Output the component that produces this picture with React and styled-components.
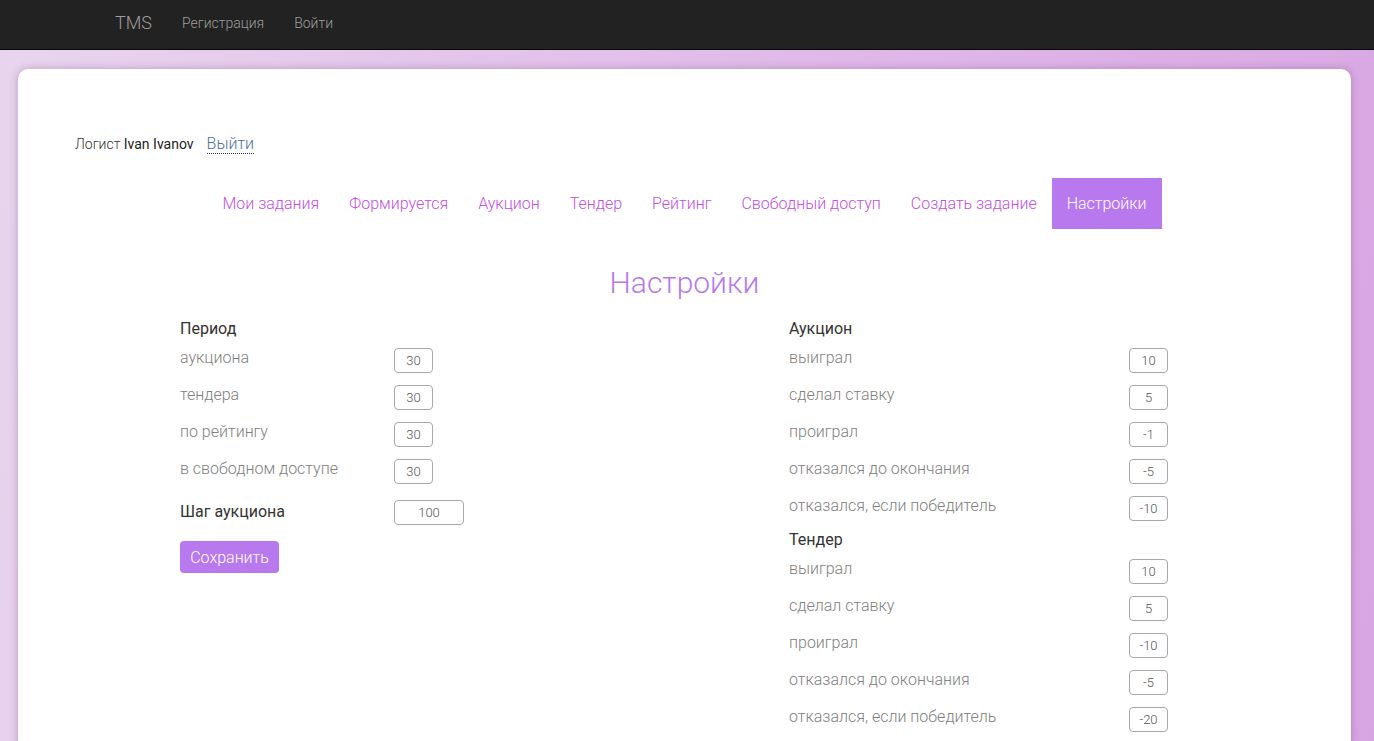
import React from "react";
import styled, { createGlobalStyle } from "styled-components";

const GlobalStyle = createGlobalStyle`
  html, body {
    margin: 0;
    padding: 0;
    overflow: hidden;
  }
  body {
    font-family: Roboto, "Liberation Sans", sans-serif;
    font-weight: 300;
    background: linear-gradient(100deg, #e8d5ed 0%, #dfb9e8 55%, #d8a5e3 100%);
    min-height: 100vh;
  }
`;

const Navbar = styled.nav`
  height: 50px;
  background: #222;
  border-bottom: 1px solid #080808;
  box-sizing: border-box;
  display: flex;
  align-items: flex-start;
  padding-left: 100px;
`;

const Brand = styled.a`
  color: #9d9d9d;
  font-size: 18px;
  font-weight: 300;
  padding: 0 15px;
  line-height: 46px;
`;

const NavLink = styled.a`
  color: #9d9d9d;
  font-size: 14px;
  font-weight: 300;
  padding: 0 15px;
  line-height: 46px;
`;

const Card = styled.main`
  margin: 19px 0 0 18px;
  width: 1333px;
  min-height: 760px;
  background: #fff;
  border-radius: 10px;
  box-shadow: 0 0 8px rgba(90, 40, 100, 0.3);
  padding-top: 64px;
  box-sizing: border-box;
`;

const UserLine = styled.div`
  padding-left: 57px;
  font-size: 14px;
  line-height: 22px;
  color: #333;
`;

const UserName = styled.span`
  font-weight: 400;
  color: #222;
`;

const Logout = styled.a`
  margin-left: 13px;
  font-size: 16px;
  color: #4f6f9f;
  border-bottom: 1px dotted #1a2fd8;
`;

const Tabs = styled.ul`
  list-style: none;
  margin: 23px 0 0;
  padding: 0;
  display: flex;
  justify-content: center;
`;

const Tab = styled.li`
  font-size: 16px;
  line-height: 21px;
  padding: 15px 15px;
  color: ${(p) => (p.active ? "#fff" : "#c24fdf")};
  background: ${(p) => (p.active ? "#b878ee" : "transparent")};
`;

const Title = styled.h1`
  margin: 37px 0 0;
  text-align: center;
  font-size: 30px;
  line-height: 34px;
  font-weight: 300;
  color: #b47aec;
`;

const Columns = styled.div`
  display: grid;
  grid-template-columns: 609px 379px;
  padding-left: 162px;
  margin-top: 19px;
`;

const Column = styled.section`
  display: flex;
  flex-direction: column;
`;

const Heading = styled.h3`
  margin: ${(p) => (p.after ? "-2px 0 8px" : "0 0 8px")};
  font-size: 16px;
  line-height: 20px;
  font-weight: 400;
  color: #333;
`;

const Row = styled.div`
  display: flex;
  align-items: flex-start;
  justify-content: ${(p) => (p.spread ? "space-between" : "flex-start")};
  height: 25px;
  margin-bottom: ${(p) => p.gap || 12}px;
`;

const Label = styled.span`
  width: ${(p) => (p.spread ? "auto" : "214px")};
  font-size: 16px;
  line-height: 22px;
  color: ${(p) => (p.strong ? "#333" : "#808080")};
  font-weight: ${(p) => (p.strong ? 400 : 300)};
  margin-top: ${(p) => (p.strong ? 2 : 0)}px;
`;

const NumInput = styled.input`
  width: ${(p) => p.w || 39}px;
  height: 25px;
  box-sizing: border-box;
  margin: 1px 0 0;
  padding: 0;
  border: 1px solid #a8a8a8;
  border-radius: 4px;
  text-align: center;
  font-family: Roboto, "Liberation Sans", sans-serif;
  font-weight: 300;
  font-size: 13px;
  color: #555;
  outline: none;
`;

const SaveButton = styled.button`
  align-self: flex-start;
  margin-top: 5px;
  width: 99px;
  height: 32px;
  border: none;
  border-radius: 4px;
  background: #b878ee;
  color: #fff;
  font-family: Roboto, "Liberation Sans", sans-serif;
  font-weight: 300;
  font-size: 16px;
  padding: 0;
`;

const tabs = [
  "Мои задания",
  "Формируется",
  "Аукцион",
  "Тендер",
  "Рейтинг",
  "Свободный доступ",
  "Создать задание",
  "Настройки",
];

const periods = [
  ["аукциона", 30],
  ["тендера", 30],
  ["по рейтингу", 30],
  ["в свободном доступе", 30],
];

const labels = [
  "выиграл",
  "сделал ставку",
  "проиграл",
  "отказался до окончания",
  "отказался, если победитель",
];

const auction = [10, 5, -1, -5, -10];
const tender = [10, 5, -10, -5, -20];

function ScoreList({ values }) {
  return values.map((v, i) => (
    <Row spread key={i}>
      <Label spread>{labels[i]}</Label>
      <NumInput defaultValue={v} />
    </Row>
  ));
}

export default function App() {
  return (
    <>
      <GlobalStyle />
      <Navbar>
        <Brand>TMS</Brand>
        <NavLink>Регистрация</NavLink>
        <NavLink>Войти</NavLink>
      </Navbar>
      <Card>
        <UserLine>
          Логист <UserName>Ivan Ivanov</UserName>
          <Logout>Выйти</Logout>
        </UserLine>
        <Tabs>
          {tabs.map((t) => (
            <Tab key={t} active={t === "Настройки"}>
              {t}
            </Tab>
          ))}
        </Tabs>
        <Title>Настройки</Title>
        <Columns>
          <Column>
            <Heading>Период</Heading>
            {periods.map(([l, v], i) => (
              <Row key={l} gap={i === 3 ? 16 : 12}>
                <Label>{l}</Label>
                <NumInput defaultValue={v} />
              </Row>
            ))}
            <Row gap={12}>
              <Label strong>Шаг аукциона</Label>
              <NumInput w={70} defaultValue={100} />
            </Row>
            <SaveButton>Сохранить</SaveButton>
          </Column>
          <Column>
            <Heading>Аукцион</Heading>
            <ScoreList values={auction} />
            <Heading after>Тендер</Heading>
            <ScoreList values={tender} />
          </Column>
        </Columns>
      </Card>
    </>
  );
}
